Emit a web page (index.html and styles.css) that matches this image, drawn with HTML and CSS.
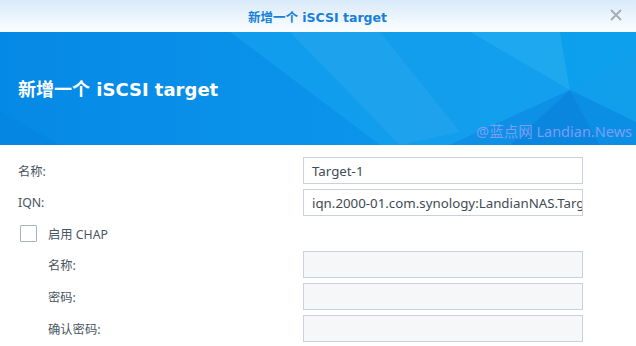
FILE: index.html
```html
<!DOCTYPE html>
<html lang="zh-CN">
<head>
<meta charset="utf-8">
<title>新增一个 iSCSI target</title>
<link rel="stylesheet" href="styles.css">
</head>
<body>
<div class="dialog">
  <div class="titlebar">
    <span class="title">新增一个 iSCSI target</span>
    <span class="close" aria-label="close">
      <svg width="12" height="12" viewBox="0 0 12 12"><path d="M1 1 L11 11 M11 1 L1 11" stroke="#a3abb3" stroke-width="1.8" fill="none"/></svg>
    </span>
  </div>
  <div class="banner">
    <svg class="facets" width="636" height="113" viewBox="0 0 636 113" preserveAspectRatio="none">
      <defs>
        <linearGradient id="bg" x1="0" y1="0" x2="1" y2="0">
          <stop offset="0" stop-color="#0589e6"/>
          <stop offset="0.45" stop-color="#0a92ea"/>
          <stop offset="1" stop-color="#0f9aec"/>
        </linearGradient>
      </defs>
      <rect width="636" height="113" fill="url(#bg)"/>
      <polygon points="230,0 470,0 570,58 450,113 380,113" fill="#18a6ef" opacity="0.55"/>
      <polygon points="470,0 560,0 570,58" fill="#2ab4f2" opacity="0.6"/>
      <polygon points="560,0 636,0 636,18 570,58" fill="#0ba2ee" opacity="0.7"/>
      <polygon points="570,58 450,113 510,113" fill="#0d8fe4" opacity="0.9"/>
      <polygon points="570,58 510,113 600,113" fill="#0a86df"/>
      <polygon points="570,58 636,18 636,90" fill="#12a0ec" opacity="0.8"/>
      <polygon points="570,58 636,90 636,113 600,113" fill="#0b8fe5"/>
      <polygon points="290,0 380,0 460,100 400,113" fill="#ffffff" opacity="0.05"/>
      <polygon points="0,80 60,113 0,113" fill="#0383e0" opacity="0.6"/>
    </svg>
    <h1 class="heading">新增一个 iSCSI target</h1>
    <span class="watermark">@蓝点网 Landian.News</span>
  </div>
  <div class="form">
    <div class="row">
      <label class="label">名称:</label>
      <div class="field"><span class="value">Target-1</span></div>
    </div>
    <div class="row">
      <label class="label">IQN:</label>
      <div class="field"><span class="value">iqn.2000-01.com.synology:LandianNAS.Target-1.1a2b3c4d5e</span></div>
    </div>
    <div class="row check-row">
      <span class="checkbox"></span>
      <span class="check-label">启用 CHAP</span>
    </div>
    <div class="row sub">
      <label class="label">名称:</label>
      <div class="field disabled"></div>
    </div>
    <div class="row sub">
      <label class="label">密码:</label>
      <div class="field disabled"></div>
    </div>
    <div class="row sub">
      <label class="label">确认密码:</label>
      <div class="field disabled"></div>
    </div>
  </div>
</div>
</body>
</html>
```
FILE: styles.css
```css
html, body {
  margin: 0;
  padding: 0;
  background: #ffffff;
}
body {
  width: 636px;
  height: 346px;
  overflow: hidden;
  font-family: "Noto Sans", "Noto Sans CJK SC", sans-serif;
}
.dialog {
  display: flex;
  flex-direction: column;
}
.titlebar {
  position: relative;
  height: 32px;
  display: flex;
  align-items: center;
  justify-content: center;
  background: linear-gradient(to bottom, #d8eaf9 0%, #eef6fd 60%, #fbfdff 100%);
}
.title {
  font-family: "DejaVu Sans", "Noto Sans CJK SC", sans-serif;
  font-weight: bold;
  font-size: 12.5px;
  color: #1580d8;
  margin-left: -1px;
}
.close {
  position: absolute;
  right: 14px;
  top: 9px;
  width: 12px;
  height: 12px;
  display: flex;
}
.banner {
  position: relative;
  height: 113px;
  display: flex;
  align-items: center;
  overflow: hidden;
}
.facets {
  position: absolute;
  left: 0;
  top: 0;
}
.heading {
  position: relative;
  margin: 0 0 2px 18px;
  font-family: "DejaVu Sans", "Noto Sans CJK SC", sans-serif;
  font-weight: bold;
  font-size: 18px;
  color: #ffffff;
}
.watermark {
  position: absolute;
  right: 4px;
  top: 88px;
  font-family: "Noto Sans", "Noto Sans CJK SC", sans-serif;
  font-size: 14.5px;
  color: rgba(160, 165, 255, 0.75);
}
.form {
  display: flex;
  flex-direction: column;
  gap: 5px;
  padding: 12px 53px 0 18px;
}
.row {
  display: flex;
  align-items: center;
  height: 27px;
}
.label {
  flex: 1;
  font-size: 12.3px;
  color: #4a5561;
}
.sub .label {
  padding-left: 30px;
}
.field {
  box-sizing: border-box;
  width: 280px;
  height: 27px;
  border: 1px solid #c7d2dd;
  background: #ffffff;
  display: flex;
  align-items: center;
  padding: 0 8px;
  overflow: hidden;
  white-space: nowrap;
}
.field.disabled {
  background: #f5f7f9;
}
.value {
  font-size: 13.3px;
  color: #414b55;
}
.check-row {
  height: 25px;
}
.checkbox {
  box-sizing: border-box;
  width: 17px;
  height: 17px;
  margin-left: 2px;
  border: 1px solid #a9b3bd;
  border-radius: 1px;
  background: #ffffff;
}
.check-label {
  margin-left: 11px;
  font-size: 12.3px;
  color: #4a5561;
}
```
